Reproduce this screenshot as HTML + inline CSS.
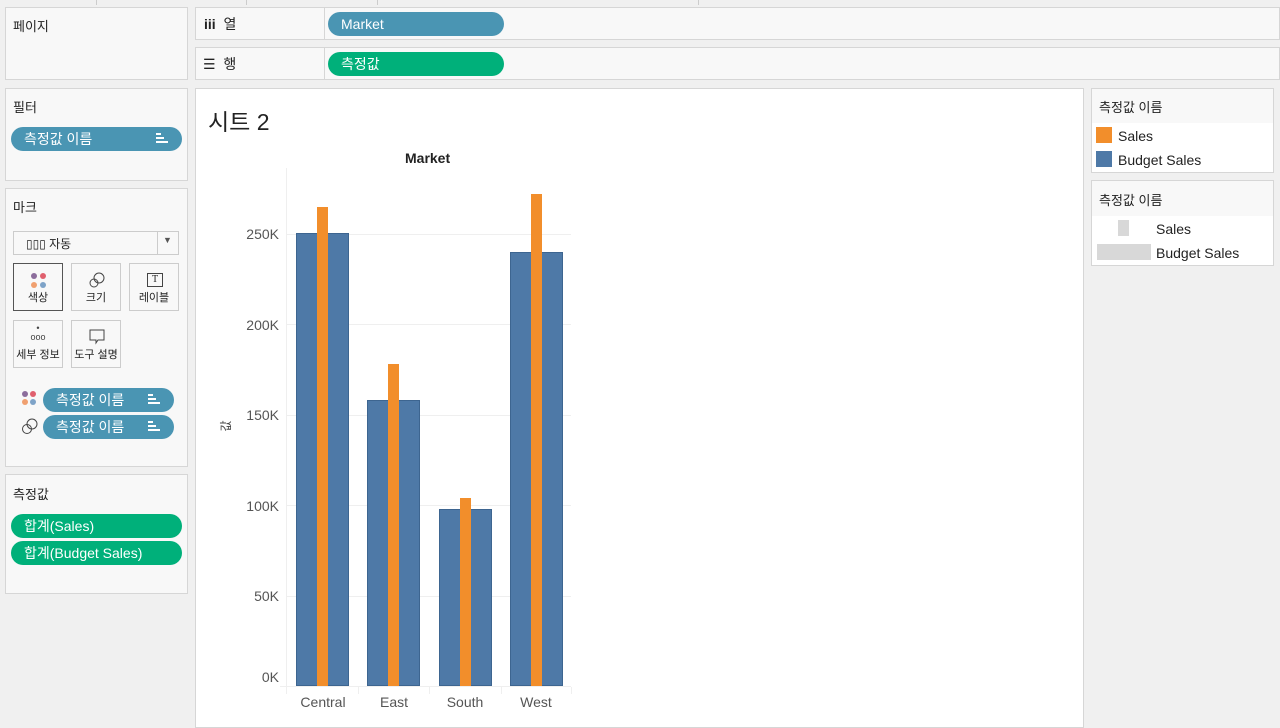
<!DOCTYPE html>
<html><head><meta charset="utf-8"><style>
body{margin:0;width:1280px;height:719px;background:#f0f0f0;position:relative;overflow:hidden;font-family:"Liberation Sans","Noto Sans CJK KR",sans-serif;color:#222}
.p{position:absolute;background:#f8f8f8;border:1px solid #d6d6d6;box-sizing:border-box}
.t{position:absolute;font-size:13px}
.pill{position:absolute;height:24px;border-radius:12px;color:#fff;font-size:14px;line-height:24px;padding-left:13px;box-sizing:border-box}
.b{background:#4a95b3}.g{background:#00b07a}
.sort{position:absolute;right:14px;top:6px;width:12px;height:12px}
.sort i{position:absolute;left:0;height:2px;background:#fff}
.btn{position:absolute;width:50px;height:48px;border:1px solid #ccc;background:#f8f8f8;box-sizing:border-box;font-size:11px;text-align:center}
.btn span{position:absolute;left:0;right:0;bottom:5px}
</style></head><body>
<div style="position:absolute;left:0;top:0;width:1280px;height:6px;background:#f0f0f0"></div>
<div style="position:absolute;left:96px;top:0;width:1px;height:5px;background:#ccc"></div>
<div style="position:absolute;left:246px;top:0;width:1px;height:5px;background:#ccc"></div>
<div style="position:absolute;left:377px;top:0;width:1px;height:5px;background:#ccc"></div>
<div style="position:absolute;left:698px;top:0;width:1px;height:5px;background:#ccc"></div>

<div class="p" style="left:5px;top:7px;width:183px;height:73px"></div>
<div class="t" style="left:13px;top:16px">페이지</div>

<div class="p" style="left:195px;top:7px;width:1085px;height:33px"></div>
<div style="position:absolute;left:324px;top:8px;width:1px;height:31px;background:#d6d6d6"></div>
<div class="t" style="left:204px;top:14px;font-size:14px"><b>iii</b>&nbsp; 열</div>
<div class="pill b" style="left:328px;top:12px;width:176px">Market</div>

<div class="p" style="left:195px;top:47px;width:1085px;height:33px"></div>
<div style="position:absolute;left:324px;top:48px;width:1px;height:31px;background:#d6d6d6"></div>
<div class="t" style="left:203px;top:54px;font-size:14px">☰&nbsp; 행</div>
<div class="pill g" style="left:328px;top:52px;width:176px">측정값</div>

<div class="p" style="left:5px;top:88px;width:183px;height:93px"></div>
<div class="t" style="left:13px;top:97px">필터</div>
<div class="pill b" style="left:11px;top:127px;width:171px">측정값 이름<div class="sort"><i style="top:0;width:5px"></i><i style="top:4px;width:8px"></i><i style="top:8px;width:12px"></i></div></div>

<div class="p" style="left:5px;top:188px;width:183px;height:279px"></div>
<div class="t" style="left:13px;top:197px">마크</div>
<div style="position:absolute;left:13px;top:231px;width:166px;height:24px;border:1px solid #ccc;background:#f8f8f8;box-sizing:border-box"></div>
<div style="position:absolute;left:157px;top:232px;width:1px;height:22px;background:#ccc"></div>
<div class="t" style="left:26px;top:235px;font-size:12px">▯▯▯ 자동</div>
<div class="t" style="left:163px;top:235px;font-size:9px;color:#555">▼</div>
<div class="btn" style="left:13px;top:263px;border:1.5px solid #555"><div style="position:absolute;left:17px;top:9px;width:16px;height:16px"><i style="position:absolute;left:0;top:0;width:6px;height:6px;border-radius:3px;background:#8c6d9c"></i><i style="position:absolute;left:9px;top:0;width:6px;height:6px;border-radius:3px;background:#e0606e"></i><i style="position:absolute;left:0;top:9px;width:6px;height:6px;border-radius:3px;background:#f0a070"></i><i style="position:absolute;left:9px;top:9px;width:6px;height:6px;border-radius:3px;background:#7ea3c8"></i></div><span>색상</span></div>
<div class="btn" style="left:71px;top:263px"><svg style="position:absolute;left:17px;top:8px" width="16" height="16"><circle cx="10" cy="6" r="5" fill="none" stroke="#444"/><circle cx="5" cy="11" r="4" fill="none" stroke="#444"/></svg><span>크기</span></div>
<div class="btn" style="left:129px;top:263px"><div style="position:absolute;left:17px;top:9px;width:14px;height:12px;border:1px solid #444;font-size:10px;line-height:12px;font-family:'Liberation Serif'">T</div><span>레이블</span></div>
<div class="btn" style="left:13px;top:320px"><div style="position:absolute;left:0;right:0;top:3px;font-size:9px;color:#444;line-height:9px">•<br>ooo</div><span>세부 정보</span></div>
<div class="btn" style="left:71px;top:320px"><svg style="position:absolute;left:17px;top:8px" width="16" height="16"><path d="M1 1H15V11H9L7 14V11H1Z" fill="none" stroke="#444"/></svg><span>도구 설명</span></div>
<div style="position:absolute;left:22px;top:391px;width:16px;height:16px"><i style="position:absolute;left:0;top:0;width:6px;height:6px;border-radius:3px;background:#8c6d9c"></i><i style="position:absolute;left:8px;top:0;width:6px;height:6px;border-radius:3px;background:#e0606e"></i><i style="position:absolute;left:0;top:8px;width:6px;height:6px;border-radius:3px;background:#f0a070"></i><i style="position:absolute;left:8px;top:8px;width:6px;height:6px;border-radius:3px;background:#7ea3c8"></i></div>
<svg style="position:absolute;left:21px;top:418px" width="17" height="17"><circle cx="11" cy="6" r="5" fill="none" stroke="#444"/><circle cx="6" cy="11" r="4.5" fill="none" stroke="#444"/></svg>
<div class="pill b" style="left:43px;top:388px;width:131px">측정값 이름<div class="sort"><i style="top:0;width:5px"></i><i style="top:4px;width:8px"></i><i style="top:8px;width:12px"></i></div></div>
<div class="pill b" style="left:43px;top:415px;width:131px">측정값 이름<div class="sort"><i style="top:0;width:5px"></i><i style="top:4px;width:8px"></i><i style="top:8px;width:12px"></i></div></div>

<div class="p" style="left:5px;top:474px;width:183px;height:120px"></div>
<div class="t" style="left:13px;top:484px">측정값</div>
<div class="pill g" style="left:11px;top:514px;width:171px">합계(Sales)</div>
<div class="pill g" style="left:11px;top:541px;width:171px">합계(Budget Sales)</div>

<div style="position:absolute;left:195px;top:88px;width:889px;height:640px;background:#fff;border:1px solid #d6d6d6;box-sizing:border-box"></div>
<div class="t" style="left:208px;top:103px;font-size:23px">시트 2</div>
<div class="t" style="left:405px;top:150px;font-weight:bold;font-size:14px">Market</div>

<svg style="position:absolute;left:196px;top:160px" width="400" height="559">
<g stroke="#efefef" stroke-width="1">
<line x1="91" x2="375" y1="74.5" y2="74.5"/><line x1="91" x2="375" y1="164.5" y2="164.5"/><line x1="91" x2="375" y1="255.5" y2="255.5"/><line x1="91" x2="375" y1="345.5" y2="345.5"/><line x1="91" x2="375" y1="436.5" y2="436.5"/><line x1="84" x2="375" y1="526.5" y2="526.5"/>
<line x1="90.5" x2="90.5" y1="8" y2="526"/>
<line x1="162.5" x2="162.5" y1="527" y2="534"/><line x1="233.5" x2="233.5" y1="527" y2="534"/><line x1="305.5" x2="305.5" y1="527" y2="534"/><line x1="375.5" x2="375.5" y1="527" y2="534"/><line x1="90.5" x2="90.5" y1="527" y2="534"/>
</g>
<g fill="#4e79a7" stroke="#3d6590"><rect x="100.5" y="73.5" width="52" height="452"/><rect x="171.5" y="240.5" width="52" height="285"/><rect x="243.5" y="349.5" width="52" height="176"/><rect x="314.5" y="92.5" width="52" height="433"/></g>
<g fill="#f28e2b"><rect x="121" y="47" width="11" height="479"/><rect x="192" y="204" width="11" height="322"/><rect x="264" y="338" width="11" height="188"/><rect x="335" y="34" width="11" height="492"/></g>
<g font-size="14" fill="#555" text-anchor="end" font-family="Liberation Sans"><text x="83" y="79">250K</text><text x="83" y="170">200K</text><text x="83" y="260">150K</text><text x="83" y="351">100K</text><text x="83" y="441">50K</text><text x="83" y="522">0K</text></g>
<g font-size="14" fill="#555" text-anchor="middle" font-family="Liberation Sans"><text x="127" y="547">Central</text><text x="198" y="547">East</text><text x="269" y="547">South</text><text x="340" y="547">West</text></g>
<text x="0" y="0" font-size="12" fill="#444" transform="translate(34,266) rotate(-90)" text-anchor="middle" font-family="Noto Sans CJK KR">값</text>
</svg>

<div class="p" style="left:1091px;top:88px;width:183px;height:85px"></div>
<div style="position:absolute;left:1092px;top:123px;width:181px;height:49px;background:#fff"></div>
<div class="t" style="left:1099px;top:97px">측정값 이름</div>
<div style="position:absolute;left:1096px;top:127px;width:16px;height:16px;background:#f28e2b"></div>
<div style="position:absolute;left:1096px;top:151px;width:16px;height:16px;background:#4e79a7"></div>
<div class="t" style="left:1118px;top:128px;font-size:14px">Sales</div>
<div class="t" style="left:1118px;top:152px;font-size:14px">Budget Sales</div>

<div class="p" style="left:1091px;top:180px;width:183px;height:86px"></div>
<div style="position:absolute;left:1092px;top:216px;width:181px;height:49px;background:#fff"></div>
<div class="t" style="left:1099px;top:190px">측정값 이름</div>
<div style="position:absolute;left:1118px;top:220px;width:11px;height:16px;background:#d8d8d8"></div>
<div style="position:absolute;left:1097px;top:244px;width:54px;height:16px;background:#d8d8d8"></div>
<div class="t" style="left:1156px;top:221px;font-size:14px">Sales</div>
<div class="t" style="left:1156px;top:245px;font-size:14px">Budget Sales</div>
</body></html>
